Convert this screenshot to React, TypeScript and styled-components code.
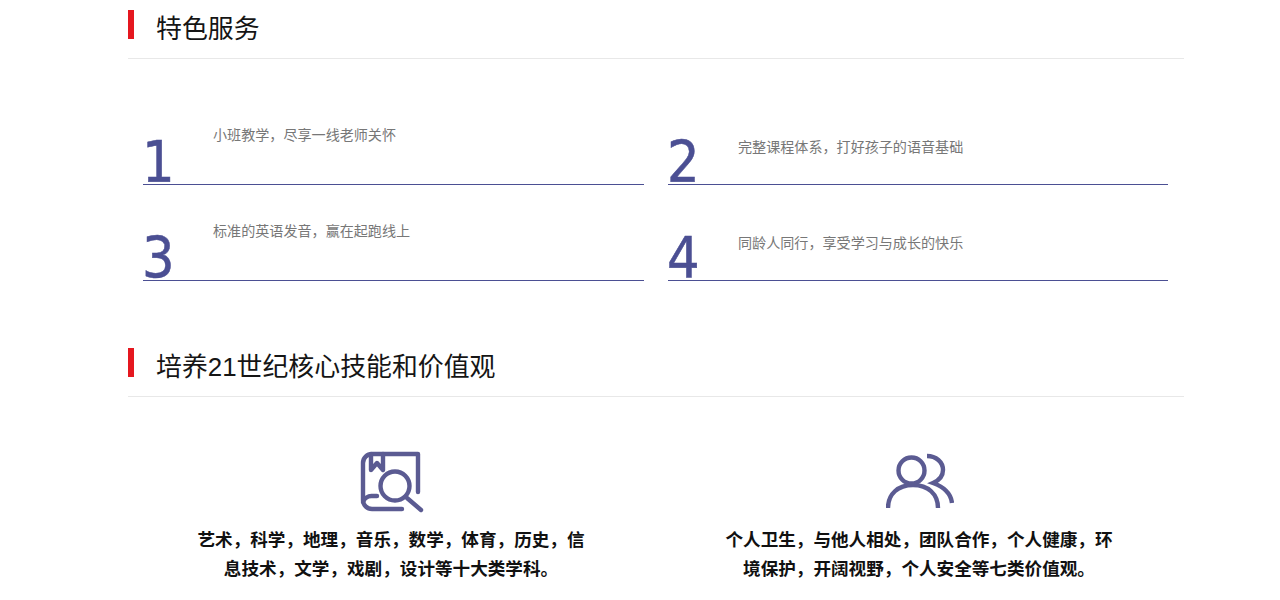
import React from "react";
import styled, { createGlobalStyle } from "styled-components";

const Global = createGlobalStyle`
  html, body { margin: 0; padding: 0; background: #fff; overflow: hidden; }
  body { font-family: "Liberation Sans", "Noto Sans CJK SC", sans-serif; }
`;
const Page = styled.div`
  width: 1056px;
  margin: 0 0 0 128px;
  padding-top: 10px;
`;
const SectionHead = styled.div`
  display: flex;
  align-items: flex-start;
  height: 48px;
  border-bottom: 1px solid #e8e8e8;
`;
const RedBar = styled.span`
  width: 6px;
  height: 29px;
  background: #e5171f;
`;
const HeadTitle = styled.h2`
  margin: 1px 0 0 22px;
  font-size: 25.9px;
  line-height: 36px;
  font-weight: 400;
  color: #151515;
`;
const Features = styled.div`
  display: grid;
  grid-template-columns: 501px 500px;
  column-gap: 24px;
  row-gap: 36px;
  padding: 66px 0 0 15px;
`;
const Feature = styled.div`
  position: relative;
  height: 59px;
  border-bottom: 1px solid #4b4f93;
  display: flex;
`;
const Num = styled.span`
  position: absolute;
  left: -1px;
  bottom: -11px;
  font-family: "DejaVu Sans", sans-serif;
  font-stretch: condensed;
  font-size: 57px;
  line-height: 66px;
  color: #4b4f93;
  -webkit-text-stroke: 0.5px #4b4f93;
`;
const FeatureText = styled.p<{ $top: number; $left: number }>`
  margin: ${(p) => p.$top}px 0 0 ${(p) => p.$left}px;
  font-size: 14.08px;
  line-height: 20px;
  color: #777;
`;
const Second = styled.section`
  margin-top: 67px;
`;
const Skills = styled.div`
  display: grid;
  grid-template-columns: 528px 528px;
  padding-top: 53px;
`;
const Skill = styled.div`
  display: flex;
  flex-direction: column;
  align-items: center;
`;
const IconWrap = styled.div`
  height: 64px;
  display: flex;
  justify-content: center;
`;
const SkillText = styled.p`
  width: 396px;
  margin: 12px 0 0;
  padding-right: 2px;
  font-size: 17.6px;
  font-weight: 700;
  line-height: 29px;
  color: #111;
  text-align: center;
`;
const BookIcon = () => (
  <svg width="64" height="64" viewBox="0 0 64 64" fill="none" stroke="#5b5b92" strokeWidth="4.4" strokeLinecap="round" strokeLinejoin="round">
    <path d="M58 42V4H12a9 9 0 0 0-9 9v37a9 9 0 0 0 9 9h30" />
    <path d="M3 52a9 9 0 0 1 9-6h5" />
    <path d="M11 4v16l6-7 6 7V4" />
    <circle cx="35" cy="36" r="14.5" />
    <path d="M47 48l14 12" />
  </svg>
);
const PeopleIcon = () => (
  <svg width="68" height="64" viewBox="0 0 68 64" fill="none" stroke="#5b5b92" strokeWidth="4.4" strokeLinecap="butt">
    <circle cx="25.5" cy="20.5" r="13" />
    <path d="M2 58C2 44 12 35 27 35S52 44 52 58" />
    <path d="M41 6C50 6 57 12 57 20C57 26 54 30 47 33C58 37 65 44 66 53" />
  </svg>
);
const features = [
  { n: "1", t: "小班教学，尽享一线老师关怀", top: 0, left: 70 },
  { n: "2", t: "完整课程体系，打好孩子的语音基础", top: 12, left: 70 },
  { n: "3", t: "标准的英语发音，赢在起跑线上", top: 0, left: 70 },
  { n: "4", t: "同龄人同行，享受学习与成长的快乐", top: 12, left: 70 },
];
export default function App() {
  return (
    <Page>
      <Global />
      <section>
        <SectionHead>
          <RedBar />
          <HeadTitle>特色服务</HeadTitle>
        </SectionHead>
        <Features>
          {features.map((f) => (
            <Feature key={f.n}>
              <Num>{f.n}</Num>
              <FeatureText $top={f.top} $left={f.left}>{f.t}</FeatureText>
            </Feature>
          ))}
        </Features>
      </section>
      <Second>
        <SectionHead>
          <RedBar />
          <HeadTitle>培养21世纪核心技能和价值观</HeadTitle>
        </SectionHead>
        <Skills>
          <Skill>
            <IconWrap><BookIcon /></IconWrap>
            <SkillText>艺术，科学，地理，音乐，数学，体育，历史，信息技术，文学，戏剧，设计等十大类学科。</SkillText>
          </Skill>
          <Skill>
            <IconWrap><PeopleIcon /></IconWrap>
            <SkillText>个人卫生，与他人相处，团队合作，个人健康，环境保护，开阔视野，个人安全等七类价值观。</SkillText>
          </Skill>
        </Skills>
      </Second>
    </Page>
  );
}
